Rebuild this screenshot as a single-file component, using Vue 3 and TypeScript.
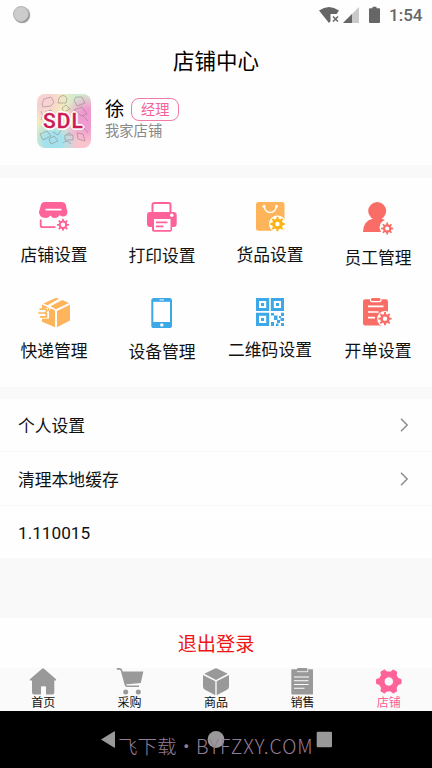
<script setup lang="ts">
interface Entry { label: string; icon: string; height: number }

const entries: Entry[] = [
  { label: '店铺设置', icon: 'store', height: 45 },
  { label: '打印设置', icon: 'printer', height: 46 },
  { label: '货品设置', icon: 'bag', height: 45 },
  { label: '员工管理', icon: 'staff', height: 48 },
  { label: '快递管理', icon: 'express', height: 45 },
  { label: '设备管理', icon: 'device', height: 46 },
  { label: '二维码设置', icon: 'qr', height: 44 },
  { label: '开单设置', icon: 'order', height: 45 },
]

const rows = [
  { label: '个人设置', arrow: true },
  { label: '清理本地缓存', arrow: true },
  { label: '1.110015', arrow: false },
]

const tabs = [
  { label: '首页', icon: 'home' },
  { label: '采购', icon: 'cart' },
  { label: '商品', icon: 'goods' },
  { label: '销售', icon: 'sales' },
  { label: '店铺', icon: 'shop' },
]

// Outline of a cog with a round hole in the middle; fill with evenodd.
function gear(cx: number, cy: number, outer: number, inner: number, hole: number, teeth: number, wide = 0.27, tip = 0.17): string {
  const step = (Math.PI * 2) / teeth
  const at = (r: number, a: number) => `${(cx + r * Math.cos(a)).toFixed(2)} ${(cy + r * Math.sin(a)).toFixed(2)}`
  const points: string[] = []
  for (let i = 0; i < teeth; i++) {
    const a = i * step
    points.push(at(inner, a - step * wide), at(outer, a - step * tip), at(outer, a + step * tip), at(inner, a + step * wide))
  }
  return `M${points.join('L')}ZM${cx - hole} ${cy}a${hole} ${hole} 0 1 0 ${hole * 2} 0a${hole} ${hole} 0 1 0 ${-hole * 2} 0Z`
}
</script>

<template>
  <div class="screen">
    <header class="status">
      <span class="dot"></span>
      <svg class="signals" width="68" height="20" viewBox="0 0 68 20">
        <path d="M0 3.500Q10-3.500 20 3.500L17.600 7H11.500V14.300L10 16Z" fill="#666" />
        <path d="m14 9.500 5 5m0-5-5 5" stroke="#666" stroke-width="1.500" />
        <path d="M24 16 40 0V16Z" fill="#c9c9c9" />
        <path d="M24 16 33 7V16Z" fill="#666" />
        <path d="M51 1.200h2.500V-.2h4v1.400H60a1 1 0 0 1 1 1V15a1 1 0 0 1-1 1h-9a1 1 0 0 1-1-1V2.200a1 1 0 0 1 1-1Z" fill="#666" />
      </svg>
      <span class="time">1:54</span>
    </header>

    <section class="top">
      <h1>店铺中心</h1>
      <div class="profile">
        <div class="avatar">
          <svg width="54" height="54" viewBox="0 0 54 54">
            <g fill="none" stroke="#8c7b80" stroke-width=".7" opacity=".75">
              <path d="m5 10 2-5 7-2 3 5-3 4-8 1ZM37 6l2-3h6l3 6-8 3ZM22 4q4-5 8 0l-1 5h-8Z" />
              <path d="m8 18 6-2 4 4-6 3ZM37 16l8-3 5 7-6 2ZM25 14l4-3 4 4-6 3ZM3 40l7-3 4 5-8 4Z" />
              <path d="M28 41h8v5h-8Zm2 0q2-5 4 0M40 39l6 1 2 7-7-2ZM12 45l5-3 4 5-7 3ZM26 49q4-4 8 1M4 17q3 5 0 9M46 22l5 5M47 34l4 5M16 38l5 3 3-5" />
            </g>
          </svg>
          <span class="brand">SDL</span>
        </div>
        <div class="who">
          <div class="line"><span class="name">徐</span><span class="role">经理</span></div>
          <div class="shop">我家店铺</div>
        </div>
      </div>
    </section>

    <section class="grid">
      <div v-for="e in entries" :key="e.label" class="entry">
        <svg width="36" :height="e.height" :viewBox="`0 0 36 ${e.height}`">
          <g v-if="e.icon === 'store'" fill="#fd6299">
            <path fill-rule="evenodd" d="M9 4H26Q29 4 29.700 6.500L31.300 13.500Q31.600 18 27.500 18.500Q25 18.500 23.700 17Q22 20 18.500 20Q16 20 14.500 17.500Q12.500 20 9.500 20Q3 19.500 3 14L5 6.500Q5.700 4 9 4ZM9.500 10.700V12.500H25.500V10.700Z" />
            <path d="M4.700 21.500V27.500Q4.700 29.200 6.500 29.200H19.500" fill="none" stroke="#fd6299" stroke-width="1.800" />
            <path fill-rule="evenodd" :d="gear(27, 26.800, 6.100, 4.300, 2.200, 8)" />
          </g>
          <g v-else-if="e.icon === 'printer'" fill="#fd6299">
            <path d="M8.500 14V7Q8.500 5 10.500 5H24.500Q26.500 5 26.500 7V14" fill="none" stroke="#fd6299" stroke-width="2" />
            <path d="M6 14H29.500Q32.700 14 32.700 17V26Q32.700 29 29.500 29H28V32Q28 33.700 26 33.700H10Q8 33.700 8 32V29H6Q3 29 3 26V17Q3 14 6 14Z" />
            <path d="M10 21H26.500V32H10Z" fill="#fff" /><circle cx="27.800" cy="17.200" r="1.700" fill="#fff" />
            <path d="M12 24.300H23.500M12 28.300H19.500" stroke="#fd6299" stroke-width="1.700" />
          </g>
          <g v-else-if="e.icon === 'bag'">
            <rect x="4" y="4" width="28.500" height="28.800" rx="2.500" fill="#fdb45a" />
            <circle cx="12" cy="8.200" r="1.500" fill="#fff" /><circle cx="24.500" cy="8.200" r="1.500" fill="#fff" />
            <path d="M12 8Q13 14.500 18.200 14.500Q23.500 14.500 24.500 8" fill="none" stroke="#fff" stroke-width="1.600" />
            <circle cx="25.500" cy="26" r="8.500" fill="#fff" />
            <path fill="#fbb414" fill-rule="evenodd" :d="gear(25.500, 26, 7.300, 5.400, 2.200, 8)" />
          </g>
          <g v-else-if="e.icon === 'staff'" fill="#fa6d66">
            <circle cx="17.200" cy="13" r="9" />
            <path d="M3 34Q3 23 13 20.500V19H21.500V20.500L25 22Q19.500 24 19.500 30L21 34Z" />
            <path fill-rule="evenodd" :d="gear(27.200, 30.500, 6.100, 4.300, 2.100, 8)" />
          </g>
          <g v-else-if="e.icon === 'express'" fill="#fdb45a">
            <path d="M7.500 9.500 20 3.700 23 4.800 11.500 11.300ZM14.500 12.300 26.200 6.100 33 9 20 15.200ZM21 17 34 10.700V26.500L21 33.300Z" />
            <path d="M6 10.600 11.500 13V18L14.500 15V14.200L19 16.500V33.300L6 27.700V24.500H13V14H6Z" />
            <path d="M2.500 14.200H11.500V24.300H2.500Z" fill="#fefefe" />
            <path d="M3.500 15.200H9.500Q11 15.500 10.500 17.500L9.500 19Q11 20 10.500 22.800H4M2.300 19H9" fill="none" stroke="#fdb45a" stroke-width="1.700" />
          </g>
          <g v-else-if="e.icon === 'device'">
            <rect x="7.300" y="4" width="20.700" height="30" rx="2.600" fill="#3ca8e7" />
            <path d="M9.300 7.800H26V28H9.300Z" fill="#fff" /><path d="M15.500 5.900H20" stroke="#fff" stroke-width=".9" />
            <rect x="16.300" y="29.500" width="3" height="3" rx=".8" fill="#fff" />
          </g>
          <g v-else-if="e.icon === 'qr'" fill="#3ca8e7">
            <path fill-rule="evenodd" d="M4 4H17.200V17H4ZM7 7V14H14.200V7ZM18.800 4H32V17H18.800ZM21.800 7V14H29V7ZM4 18.700H17.200V32H4ZM7 21.700V29H14.200V21.700Z" />
            <path d="M9 9h3v3H9ZM24 9h3v3H24ZM9 24h3v3H9ZM19 19h3v2.500h-3ZM22 21.500h3.500v4.500H22ZM25 26h3v3h-3ZM29 18.700h3V22h-3ZM19 28h3v4h-3ZM28.500 24H32v3h-3.500ZM27 22h2v2h-2ZM24 29.500h2.500V32H24ZM29 29h3v3h-3Z" />
          </g>
          <g v-else fill="#fa6d66">
            <rect x="3" y="5.300" width="25" height="26.200" rx="2.200" />
            <rect x="10" y="2.500" width="11.500" height="5.800" rx="2" fill="#fff" /><rect x="11" y="4" width="9.500" height="3" rx="1.300" />
            <path d="M8 12.300H23.500M8 18H18.500M8 23.700H15" stroke="#fff" stroke-width="1.700" />
            <circle cx="25" cy="24.700" r="7.800" fill="#fff" />
            <path fill-rule="evenodd" :d="gear(25, 24.700, 6.700, 4.800, 2.200, 8)" />
          </g>
        </svg>
        <span>{{ e.label }}</span>
      </div>
    </section>

    <section class="list">
      <div v-for="r in rows" :key="r.label" class="row">
        <span>{{ r.label }}</span>
        <svg v-if="r.arrow" width="9" height="14" viewBox="0 0 9 14"><path d="m1 .8 6.200 6.200L1 13.200" fill="none" stroke="#888" stroke-width="1.400" /></svg>
      </div>
    </section>

    <button class="logout">退出登录</button>

    <nav class="tabs">
      <div v-for="t in tabs" :key="t.label" class="tab" :class="{ active: t.icon === 'shop' }">
        <svg width="28" height="28" viewBox="0 0 28 28" fill="currentColor">
          <path v-if="t.icon === 'home'" d="M13 .7Q14-.4 15 .7L26.800 11Q28 12.500 26 12.500H25.300V24.500Q25.300 26.500 23.300 26.500H17V19.200Q17 18.200 16 18.200H13Q12 18.200 12 19.200V26.500H5Q3 26.500 3 24.500V12.500H1.800Q0 12.500 1.200 11Z" />
          <g v-else-if="t.icon === 'cart'">
            <path d="M5.500 3.500H27.300L24.800 15 9 16.500Z" />
            <path d="M.8.900H3.300Q5 .9 5.500 2.600L9 15Q9.500 18.300 11 18.300H23" fill="none" stroke="currentColor" stroke-width="1.600" />
            <circle cx="9.700" cy="23.900" r="2.500" /><circle cx="22.300" cy="23.900" r="2.500" />
          </g>
          <path v-else-if="t.icon === 'goods'" d="M14 .3Q14.800.3 16 1.100L25.700 5.800 14 12 2.300 5.800 12 1.100Q13.200.3 14 .3ZM1 7 13.300 13.200V27.200L3 21.700Q1 20.700 1 18.700ZM27 7 14.700 13.200V27.200L25 21.700Q27 20.700 27 18.700Z" />
          <g v-else-if="t.icon === 'sales'">
            <path d="M4 1.300H9Q9-.1 10.500-.1H18Q19.500-.1 19.500 1.300H24.500Q25 1.300 25 2V25.700Q25 26.400 24.300 26.400H4Q3.300 26.400 3.300 25.700V2Q3.300 1.300 4 1.300Z" />
            <path d="M9 3.700H19.800V1.300" fill="none" stroke="#fff" stroke-width=".8" />
            <path d="M6 9H21M6 12.700H20.500M6 16.500H20.500M6 20.200H16.500" stroke="#fff" stroke-width="1.100" />
          </g>
          <path v-else fill-rule="evenodd" stroke="currentColor" stroke-width="1" stroke-linejoin="round" :d="gear(13.800, 13.500, 12.400, 9.700, 4.700, 6, .31, .16)" />
        </svg>
        <span>{{ t.label }}</span>
      </div>
    </nav>

    <footer class="system">
      <svg width="432" height="58" viewBox="0 0 432 58" fill="#999">
        <path d="M101 28.500 114 20.500Q115 20 115 21V36Q115 37 114 36.500Z" />
        <circle cx="216" cy="28.500" r="8.400" /><rect x="316.700" y="20.700" width="15.300" height="15.500" rx="1" />
      </svg>
      <span class="mark">飞下载・<span class="site">BYFZXY.COM</span></span>
    </footer>
  </div>
</template>

<style>
body { margin: 0; background: #fafafa; }
</style>

<style scoped>
.screen { width: 432px; height: 768px; display: flex; flex-direction: column; overflow: hidden; background: #f9f9f9; color: #111; font-family: Roboto, "Noto Sans CJK SC", sans-serif; }
.status { height: 30px; flex: none; background: #fefefe; display: flex; align-items: center; padding: 0 10px 0 13px; }
.dot { box-sizing: border-box; width: 16px; height: 16px; border: 1px solid #b5b5b5; border-radius: 50%; background: #ccc; box-shadow: 1px 1px 1px #888; margin: -2px auto 0 0; }
.signals { margin: 4px 2px 0 0; overflow: visible; }
.time { font-size: 17px; font-weight: 500; color: #666; width: 33px; white-space: nowrap; }
.top { height: 135px; flex: none; background: #fefefe; margin-bottom: 13px; }
h1 { margin: 0; padding-top: 16px; font-size: 21.500px; line-height: 32px; font-weight: 400; text-align: center; color: #000; }
.profile { display: flex; padding: 16px 0 0 37px; }
.avatar { position: relative; width: 54px; height: 54px; border-radius: 8px; overflow: hidden; background: radial-gradient(circle at 95% 45%, #ef9bd0 0 16%, transparent 42%), radial-gradient(circle at 30% 88%, #a3e2ec 0 15%, transparent 40%), radial-gradient(circle at 85% 85%, #fac4cd 0 20%, transparent 45%), radial-gradient(circle at 10% 12%, #f8d1d2 0 12%, transparent 35%), radial-gradient(circle at 80% 5%, #d4ead0 0 10%, transparent 35%), #f5eeb8; }
.brand { position: absolute; left: 6px; top: 15px; font: 500 21px/24px Roboto, sans-serif; letter-spacing: 1px; color: #cd1c55; -webkit-text-stroke: .3px #cd1c55; text-shadow: 1px 1px #fff, -1px -1px #fff, 1px -1px #fff, -1px 1px #fff, 2px 0 #fff, -2px 0 #fff, 0 2px #fff, 0 -2px #fff; }
.who { padding-left: 14px; }
.line { display: flex; align-items: center; height: 28px; gap: 7px; }
.name { font-size: 19.300px; color: #000; }
.role { box-sizing: border-box; width: 48px; height: 23px; border: 1.500px solid #f27aa9; border-radius: 8px; color: #f4649b; font-size: 14.300px; line-height: 22px; text-align: center; margin-top: 3px; }
.shop { font-size: 14.300px; line-height: 18px; color: #888; }
.grid { box-sizing: border-box; height: 209px; flex: none; background: #fefefe; padding-top: 20px; display: grid; grid-template-columns: repeat(4, 108px); grid-template-rows: 96px 96px; margin-bottom: 11.500px; }
.entry { display: flex; flex-direction: column; align-items: center; font-size: 16.800px; line-height: 24px; white-space: nowrap; }
.entry svg { flex: none; }
.list { flex: none; background: #fefefe; height: 159.500px; }
.row { box-sizing: border-box; height: 53.800px; display: flex; align-items: center; justify-content: space-between; padding: 0 23px 0 18px; border-bottom: 1.500px solid #f8f8f8; font-size: 16.800px; }
.row:last-child { height: 52px; border: 0; padding-top: 1px; font-size: 17.200px; }
.logout { flex: none; height: 49.500px; margin: 60px 0 0; padding: 0; border: 0; background: #fefefe; color: #ee1515; font: 19.200px "Noto Sans CJK SC", sans-serif; }
.tabs { height: 43px; flex: none; display: grid; grid-template-columns: repeat(5, 1fr); background: #fafafa; }
.tab { display: flex; flex-direction: column; align-items: center; color: #999; }
.tab span { font-size: 12px; line-height: 16px; color: #111; margin-top: -1px; }
.tab.active, .tab.active span { color: #fd6299; }
.system { position: relative; flex: none; height: 58px; background: #000; }
.system svg { display: block; }
.mark { position: absolute; left: 118px; top: 21px; font: 300 19.500px/28px "Noto Sans CJK SC", sans-serif; color: #947d98; white-space: nowrap; }
.site { letter-spacing: .95px; }
</style>
